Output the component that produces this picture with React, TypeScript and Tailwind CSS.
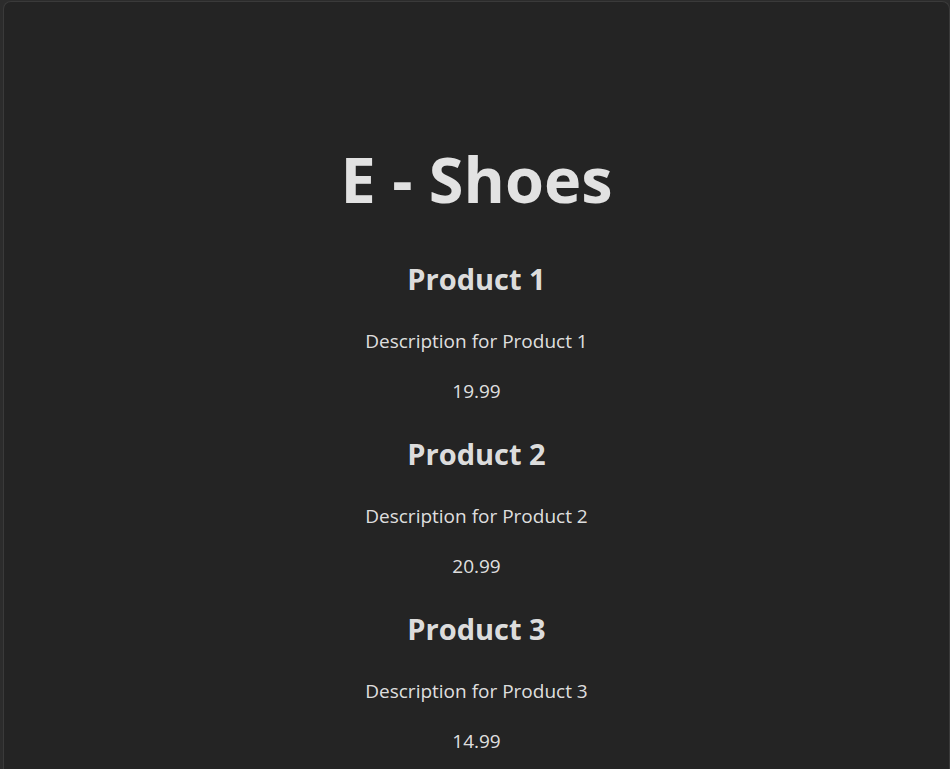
const products = [
  { id: 1, name: 'Product 1', description: 'Description for Product 1', price: 19.99 },
  { id: 2, name: 'Product 2', description: 'Description for Product 2', price: 20.99 },
  { id: 3, name: 'Product 3', description: 'Description for Product 3', price: 14.99 },
];

export default function App() {
  return (
    <div className="min-h-screen bg-[#2c2c2c] pt-[1px] pl-[3px] font-['Open_Sans',sans-serif]">
      <div className="min-h-[768px] bg-[#242424] border-t border-l border-r border-[#3a3a3a] rounded-t-lg text-center text-[rgba(255,255,255,0.87)] pt-[142px] pb-10">
        <h1 className="text-[63px] leading-[70px] font-bold mb-[42px]">E - Shoes</h1>

        <div className="flex flex-col gap-[25px]">
          {products.map((product) => (
            <div key={product.id}>
              <h2 className="text-[29px] leading-[45px] font-bold mb-[25px]">{product.name}</h2>
              <p className="text-[19px] leading-[30px] mb-5">{product.description}</p>
              <p className="text-[19px] leading-[30px]">{product.price}</p>
            </div>
          ))}
        </div>
      </div>
    </div>
  );
}
